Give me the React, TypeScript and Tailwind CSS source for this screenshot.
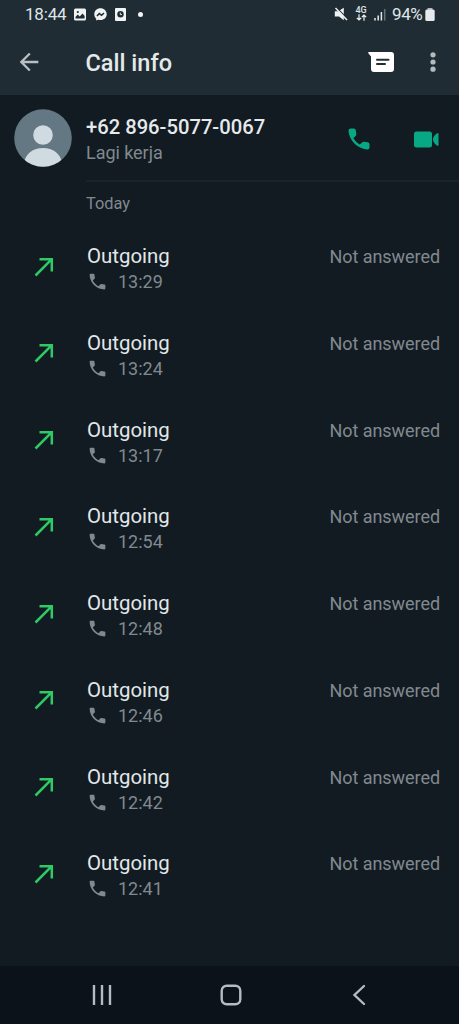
import type { ReactNode } from 'react';

interface Call {
  time: string;
  status: string;
}

const calls: Call[] = [
  { time: '13:29', status: 'Not answered' },
  { time: '13:24', status: 'Not answered' },
  { time: '13:17', status: 'Not answered' },
  { time: '12:54', status: 'Not answered' },
  { time: '12:48', status: 'Not answered' },
  { time: '12:46', status: 'Not answered' },
  { time: '12:42', status: 'Not answered' },
  { time: '12:41', status: 'Not answered' },
];

function PhoneIcon() {
  return (
    <svg viewBox="0 0 24 24" fill="currentColor" className="size-[21px]">
      <path d="M6.62 10.79c1.44 2.83 3.76 5.14 6.59 6.59l2.2-2.2c.27-.27.67-.36 1.02-.24 1.12.37 2.33.57 3.57.57.55 0 1 .45 1 1V20c0 .55-.45 1-1 1-9.39 0-17-7.61-17-17 0-.55.45-1 1-1h3.5c.55 0 1 .45 1 1 0 1.25.2 2.45.57 3.57.11.35.03.74-.25 1.02l-2.2 2.2z" />
    </svg>
  );
}

function StatusBar() {
  return (
    <div className="flex h-7 items-center pl-[25px] pr-6 text-[#dfe5e8]">
      <span className="w-[49px] text-[17px] leading-5 tracking-[-0.2px]">18:44</span>
      <svg width="12" height="13" viewBox="0 0 12 13" className="shrink-0">
        <rect y="0.5" width="12" height="12" rx="1.5" fill="#f1f4f5" />
        <path d="M1.5 10.5V9l2.2-2.5 2 2L8.6 5.6l2 2.4v2.5z" fill="#202c33" />
        <circle cx="3.8" cy="4" r="1.1" fill="#202c33" />
      </svg>
      <svg width="13" height="13" viewBox="0 0 13 13" className="ml-2 shrink-0">
        <path d="M6.5.3C2.9.3.3 2.9.3 6.3c0 1.8.7 3.3 1.9 4.4v1.8l1.9-.8c.7.3 1.5.4 2.4.4 3.6 0 6.2-2.5 6.2-5.8S10.1.3 6.5.3Z" fill="#f1f4f5" />
        <path d="M3 8l2.3-2.5 2.3 1.8L10 5" fill="none" stroke="#202c33" strokeWidth="1.6" />
      </svg>
      <svg width="11" height="13" viewBox="0 0 11 13" className="ml-2 shrink-0">
        <rect width="11" height="13" rx="1" fill="#f1f4f5" />
        <circle cx="5.5" cy="6.3" r="3.2" fill="#202c33" />
        <path d="M5.3 4.6v2h1.6" fill="none" stroke="#f1f4f5" strokeWidth="0.9" />
      </svg>
      <span className="ml-3 size-[5px] rounded-full bg-[#f1f4f5]" />

      <div className="ml-auto flex items-center">
        <svg width="14" height="14" viewBox="0 0 14 14" className="mr-[7px]">
          <path d="M.8 4.2h3.4L9.800.8v12.400L5 9.600H.8z" fill="#eef1f2" />
          <path d="M2.600.6l11 11.400" stroke="#202c33" strokeWidth="1.200" />
          <path d="M1.500 1l11.500 12" stroke="#eef1f2" strokeWidth="1.500" />
        </svg>
        <div className="mr-[7px] flex w-3 flex-col items-center">
          <span className="text-[9px] font-medium leading-[7px]">4G</span>
          <svg width="11" height="7" viewBox="0 0 11 7" fill="none" stroke="#eef1f2" strokeWidth="1.2">
            <path d="M3 .3v5.5M.8 3.8L3 6l2.2-2.2M8 6.7V1.2M5.8 3.2L8 1l2.2 2.2" />
          </svg>
        </div>
        <svg width="12" height="13" viewBox="0 0 12 13" className="mr-1.5">
          <path d="M1 10v2.5M4.2 7.5v5M7.4 4v8.5" stroke="#e4e9eb" strokeWidth="1.5" />
          <path d="M10.7 1v11.5" stroke="#66737a" strokeWidth="1.5" />
        </svg>
        <span className="w-8 text-[17px] leading-5 tracking-[-0.4px]">94%</span>
        <svg width="10" height="13" viewBox="0 0 10 13" className="ml-px">
          <rect x="2.5" width="5" height="3" rx="0.5" fill="#aeb6ba" />
          <rect x="0.3" y="1.5" width="9.4" height="11.5" rx="1.5" fill="#e6eaec" />
        </svg>
      </div>
    </div>
  );
}

function TopBar() {
  return (
    <div className="flex h-[67px] items-center pl-[15px] pr-[23px]">
      <svg viewBox="0 0 24 24" className="size-7 shrink-0" fill="#b8bfc2">
        <path d="M20 11H7.83l5.59-5.59L12 4l-8 8 8 8 1.41-1.41L7.83 13H20v-2z" />
      </svg>
      <h1 className="ml-[42.5px] pt-[3px] text-[23.5px] font-medium leading-7 text-[#e4e9eb]">Call info</h1>
      <svg width="26" height="20" viewBox="0 0 26 20" className="ml-auto">
        <path d="M1 0h22a3 3 0 0 1 3 3v14a3 3 0 0 1-3 3H6a3 3 0 0 1-3-3V4.5L.3 1.2C-.1.600.3 0 1 0z" fill="#fff" />
        <path d="M9 7.800h11.500M9 12h8" stroke="#202c33" strokeWidth="2" strokeLinecap="round" />
      </svg>
      <svg width="6" height="20" viewBox="0 0 6 20" className="ml-9" fill="#b3bbbf">
        <circle cx="3" cy="2.8" r="2.6" />
        <circle cx="3" cy="10" r="2.6" />
        <circle cx="3" cy="17.2" r="2.6" />
      </svg>
    </div>
  );
}

function Contact() {
  return (
    <div className="flex h-[87px] shrink-0 pl-[14px]">
      <svg width="58" height="58" viewBox="0 0 58 58" className="mt-3.5 shrink-0">
        <defs>
          <clipPath id="avatar">
            <circle cx="29" cy="29" r="28.8" />
          </clipPath>
        </defs>
        <g clipPath="url(#avatar)">
          <rect width="58" height="58" fill="#637883" />
          <circle cx="29" cy="26" r="9.8" fill="#d0dae1" />
          <path d="M9.5 58c0-12 8.5-19 19.5-19s19.500 7 19.500 19z" fill="#d0dae1" />
        </g>
      </svg>
      <div className="ml-3.5 flex flex-1 border-b-2 border-[#19252b]">
        <div className="pt-[19px]">
          <div className="text-[20.2px] font-medium leading-[26px] text-[#e6eaed]">+62 896-5077-0067</div>
          <div className="text-[18px] leading-[26px] tracking-[-0.05px] text-[#81898f]">Lagi kerja</div>
        </div>
        <div className="ml-auto flex items-center pr-5 pt-[3px] text-[#09a884]">
          <svg viewBox="0 0 24 24" fill="currentColor" className="mr-[41px] size-[28px]">
            <path d="M5 3h2.500c1 0 1.700.700 1.800 1.700l.4 3c.1.700-.1 1.300-.6 1.800l-1.900 1.700c1.300 2.400 3.100 4.200 5.500 5.500l1.900-1.800c.5-.5 1.100-.7 1.800-.6l3 .4c1 .1 1.600.8 1.600 1.800V19c0 1.200-1 2.100-2.200 2C10.500 20.300 3.700 13.500 3 5.200 2.900 4 3.800 3 5 3z" />
          </svg>
          <svg width="25" height="17" viewBox="0 0 25 17" fill="currentColor">
            <rect y="0.5" width="18" height="16" rx="2.5" />
            <path d="M19 8.5c0-3 2-4.500 4.300-6.200.6-.4 1.200-.1 1.200.6v11.200c0 .7-.6 1-1.200.6-2.300-1.700-4.300-3.200-4.300-6.200z" />
          </svg>
        </div>
      </div>
    </div>
  );
}

function CallRow({ time, status }: Call) {
  return (
    <div className="flex h-[86.75px] pl-[34px] pr-[19px]">
      <svg width="20" height="20" viewBox="0 0 20 20" className="mt-[22.5px]" fill="none" stroke="#2fc965" strokeWidth="2.5">
        <path d="M1.5 18.5L17.8 2.2M5.5 2.2h12.3v12.3" />
      </svg>
      <div className="ml-[33px] pt-[9px]">
        <div className="text-[20.4px] leading-[26px] text-[#e2e7ea]">Outgoing</div>
        <div className="flex h-[25px] items-center text-[#81898f]">
          <PhoneIcon />
          <span className="ml-[10px] text-[18px]">{time}</span>
        </div>
      </div>
      <span className="ml-auto pt-[10px] text-[18px] leading-[26px] tracking-[-0.05px] text-[#81898f]">{status}</span>
    </div>
  );
}

function NavItem({ children }: { children: ReactNode }) {
  return <div className="flex w-[128.5px] items-center justify-center">{children}</div>;
}

function NavBar() {
  return (
    <nav className="flex h-[58px] shrink-0 justify-center bg-[#0b1219] pl-0.5 text-[#b5bbc0]">
      <NavItem>
        <svg width="22" height="22" viewBox="0 0 22 22" stroke="currentColor" strokeWidth="2.4">
          <path d="M3 1v20M11 1v20M19 1v20" />
        </svg>
      </NavItem>
      <NavItem>
        <svg width="22" height="22" viewBox="0 0 22 22" fill="none" stroke="currentColor" strokeWidth="2.4">
          <rect x="1.7" y="1.7" width="18.6" height="18.6" rx="5" />
        </svg>
      </NavItem>
      <NavItem>
        <svg width="22" height="22" viewBox="0 0 22 22" fill="none" stroke="currentColor" strokeWidth="2.4">
          <path d="M16 2L6.500 11l9.500 9" strokeLinecap="round" />
        </svg>
      </NavItem>
    </nav>
  );
}

export default function App() {
  return (
    <div className="flex h-screen w-full flex-col overflow-hidden bg-[#121b22] font-['Roboto',sans-serif]">
      <header className="h-[95px] shrink-0 bg-[#202c33]">
        <StatusBar />
        <TopBar />
      </header>
      <main className="flex min-h-0 flex-1 flex-col">
        <Contact />
        <div className="flex h-[52px] shrink-0 pl-[86px] pt-2.5 text-[16.4px] leading-[23px] text-[#81898f]">Today</div>
        <div>
          {calls.map((call) => (
            <CallRow key={call.time} {...call} />
          ))}
        </div>
      </main>
      <NavBar />
    </div>
  );
}
